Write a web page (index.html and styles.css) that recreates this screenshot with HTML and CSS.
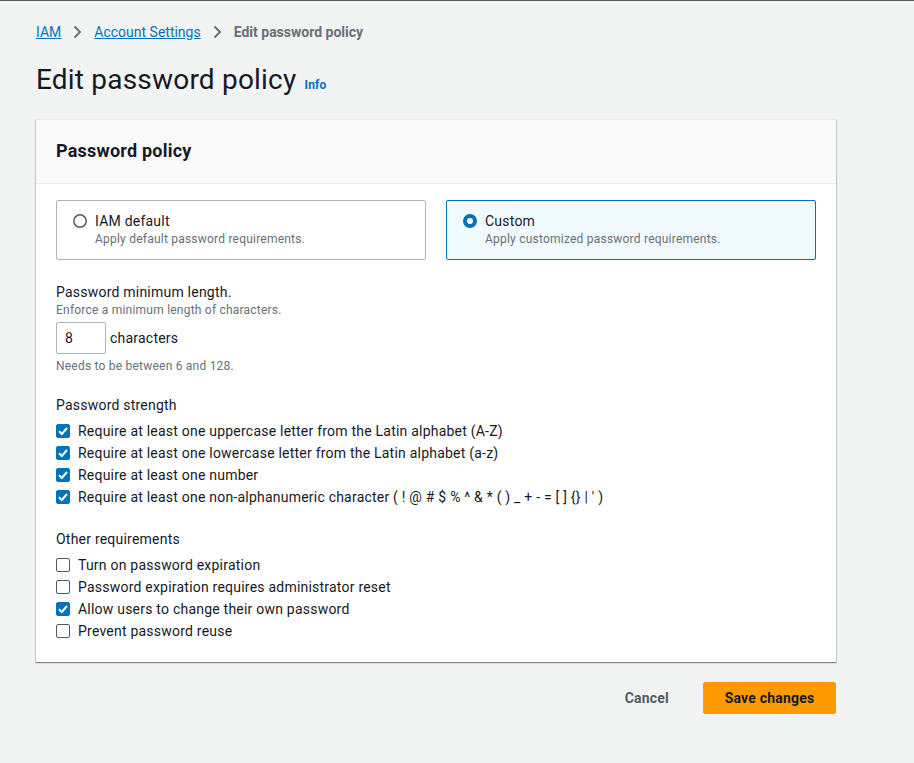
FILE: index.html
```html
<!DOCTYPE html>
<html lang="en">
<head>
<meta charset="utf-8">
<title>Edit password policy</title>
<link rel="stylesheet" href="styles.css">
</head>
<body>
<div class="page">
  <nav class="breadcrumbs">
    <a href="#" class="crumb-link">IAM</a>
    <svg class="chev" viewBox="0 0 16 16" width="16" height="16"><path d="M5.5 2.5 11 8l-5.5 5.5" fill="none" stroke="#687078" stroke-width="2"/></svg>
    <a href="#" class="crumb-link">Account Settings</a>
    <svg class="chev" viewBox="0 0 16 16" width="16" height="16"><path d="M5.5 2.5 11 8l-5.5 5.5" fill="none" stroke="#687078" stroke-width="2"/></svg>
    <span class="crumb-current">Edit password policy</span>
  </nav>

  <div class="title-row">
    <h1 class="title">Edit password policy</h1>
    <a href="#" class="info">Info</a>
  </div>

  <section class="card">
    <header class="card-header">
      <h2 class="card-title">Password policy</h2>
    </header>
    <div class="card-body">
      <div class="tiles">
        <div class="tile">
          <div class="tile-top">
            <svg class="radio" viewBox="0 0 14 14" width="14" height="14"><circle cx="7" cy="7" r="6.2" fill="#fff" stroke="#545b64" stroke-width="1.5"/></svg>
            <span class="tile-label">IAM default</span>
          </div>
          <div class="tile-desc">Apply default password requirements.</div>
        </div>
        <div class="tile tile-selected">
          <div class="tile-top">
            <svg class="radio" viewBox="0 0 14 14" width="14" height="14"><circle cx="7" cy="7" r="5" fill="#fff" stroke="#0073bb" stroke-width="4"/></svg>
            <span class="tile-label">Custom</span>
          </div>
          <div class="tile-desc">Apply customized password requirements.</div>
        </div>
      </div>

      <div class="field field-length">
        <div class="field-label">Password minimum length.</div>
        <div class="field-desc">Enforce a minimum length of characters.</div>
        <div class="length-row">
          <div class="input">8</div>
          <span class="unit">characters</span>
        </div>
        <div class="field-desc constraint">Needs to be between 6 and 128.</div>
      </div>

      <div class="field field-group">
        <div class="field-label">Password strength</div>
        <ul class="checks">
          <li class="check"><span class="box on"><svg viewBox="0 0 14 14" width="14" height="14"><path d="M3 7.2 5.8 10 11 4" fill="none" stroke="#fff" stroke-width="2"/></svg></span>Require at least one uppercase letter from the Latin alphabet (A-Z)</li>
          <li class="check"><span class="box on"><svg viewBox="0 0 14 14" width="14" height="14"><path d="M3 7.2 5.8 10 11 4" fill="none" stroke="#fff" stroke-width="2"/></svg></span>Require at least one lowercase letter from the Latin alphabet (a-z)</li>
          <li class="check"><span class="box on"><svg viewBox="0 0 14 14" width="14" height="14"><path d="M3 7.2 5.8 10 11 4" fill="none" stroke="#fff" stroke-width="2"/></svg></span>Require at least one number</li>
          <li class="check"><span class="box on"><svg viewBox="0 0 14 14" width="14" height="14"><path d="M3 7.2 5.8 10 11 4" fill="none" stroke="#fff" stroke-width="2"/></svg></span>Require at least one non-alphanumeric character ( ! @ # $ % ^ &amp; * ( ) _ + - = [ ] {} | ' )</li>
        </ul>
      </div>

      <div class="field field-group">
        <div class="field-label">Other requirements</div>
        <ul class="checks">
          <li class="check"><span class="box"></span>Turn on password expiration</li>
          <li class="check"><span class="box"></span>Password expiration requires administrator reset</li>
          <li class="check"><span class="box on"><svg viewBox="0 0 14 14" width="14" height="14"><path d="M3 7.2 5.8 10 11 4" fill="none" stroke="#fff" stroke-width="2"/></svg></span>Allow users to change their own password</li>
          <li class="check"><span class="box"></span>Prevent password reuse</li>
        </ul>
      </div>
    </div>
  </section>

  <div class="actions">
    <button class="btn btn-link">Cancel</button>
    <button class="btn btn-primary">Save changes</button>
  </div>
</div>
</body>
</html>
```

FILE: styles.css
```css
* { box-sizing: border-box; }

html, body {
  margin: 0;
  padding: 0;
}

body {
  background: #f2f3f3;
  border-top: 1px solid #545b64;
  font-family: Roboto, "Liberation Sans", Arial, sans-serif;
  font-size: 14px;
  line-height: 20px;
  letter-spacing: 0.22px;
  color: #16191f;
  min-height: 763px;
}

.page {
  width: 800px;
  margin-left: 36px;
  padding-top: 21px;
}

.breadcrumbs {
  display: flex;
  align-items: center;
  height: 20px;
  letter-spacing: 0;
}

.crumb-link {
  color: #0073bb;
  text-decoration: underline;
}

.chev {
  margin: 0 9px 0 8px;
  display: block;
}

.crumb-current {
  color: #687078;
  font-weight: 700;
}

.title-row {
  display: flex;
  align-items: baseline;
  margin-top: 20px;
}

.title {
  margin: 0;
  font-size: 28px;
  line-height: 36px;
  font-weight: 400;
  letter-spacing: 0.2px;
  color: #16191f;
}

.info {
  margin-left: 8px;
  font-size: 12px;
  font-weight: 700;
  color: #0073bb;
  text-decoration: none;
}

.card {
  margin-top: 21px;
  background: #fff;
  border-top: 1px solid #eaeded;
  box-shadow: 0 1px 1px 0 rgba(0, 28, 36, 0.3), 1px 1px 1px 0 rgba(0, 28, 36, 0.15), -1px 1px 1px 0 rgba(0, 28, 36, 0.15);
}

.card-header {
  height: 64px;
  background: #fafafa;
  border-bottom: 1px solid #eaeded;
  padding: 20px 20px 0;
}

.card-title {
  margin: 0;
  font-size: 18px;
  line-height: 22px;
  font-weight: 700;
}

.card-body {
  padding: 16px 20px 21px;
}

.tiles {
  display: grid;
  grid-template-columns: 1fr 1fr;
  gap: 20px;
}

.tile {
  height: 60px;
  border: 1px solid #aab7b8;
  border-radius: 2px;
  padding: 10px 16px 12px;
}

.tile-selected {
  border-color: #0073bb;
  background: #f1faff;
}

.tile-top {
  display: flex;
  align-items: center;
  height: 20px;
}

.radio {
  display: block;
  margin-right: 8px;
}

.tile-desc {
  margin-left: 22px;
  font-size: 12px;
  line-height: 16px;
  color: #687078;
}

.field-length {
  margin-top: 22px;
}

.field-desc {
  font-size: 12px;
  line-height: 16px;
  color: #687078;
}

.length-row {
  display: flex;
  align-items: center;
  margin-top: 4px;
}

.input {
  width: 50px;
  height: 32px;
  border: 1px solid #aab7b8;
  border-radius: 2px;
  padding: 0 8px;
  display: flex;
  align-items: center;
  background: #fff;
}

.unit {
  margin-left: 4px;
}

.constraint {
  margin-top: 4px;
}

.field-group {
  margin-top: 21px;
}

.field-group + .field-group {
  margin-top: 22px;
}

.checks {
  list-style: none;
  margin: 6px 0 0;
  padding: 0;
  display: flex;
  flex-direction: column;
  gap: 2px;
}

.check {
  display: flex;
  align-items: center;
  height: 20px;
}

.box {
  width: 14px;
  height: 14px;
  border: 1px solid #545b64;
  border-radius: 2px;
  margin-right: 8px;
  flex: none;
  display: flex;
  align-items: center;
  justify-content: center;
  background: #fff;
}

.box.on {
  background: #0073bb;
  border-color: #0073bb;
}

.box svg {
  display: block;
  flex: none;
}

.actions {
  display: flex;
  justify-content: flex-end;
  align-items: center;
  margin-top: 20px;
  gap: 13px;
}

.btn {
  font-family: inherit;
  font-size: 14px;
  font-weight: 700;
  letter-spacing: 0.2px;
  height: 32px;
  border-radius: 2px;
  cursor: pointer;
}

.btn-link {
  background: transparent;
  border: 1px solid transparent;
  color: #545b64;
  padding: 0 20px;
}

.btn-primary {
  width: 133px;
  background: #ff9900;
  border: 1px solid #ff9900;
  color: #16191f;
  padding: 0 20px;
}
```
